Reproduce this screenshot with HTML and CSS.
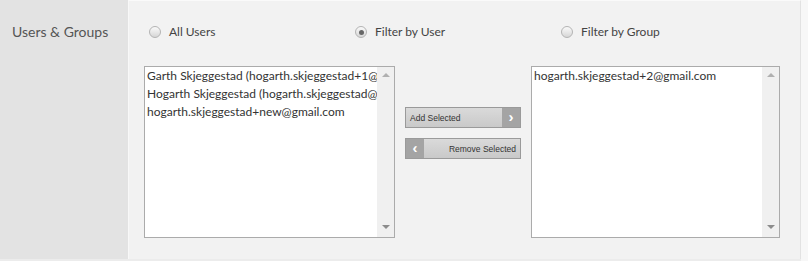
FILE: index.html
```html
<!DOCTYPE html>
<html lang="en">
<head>
  <meta charset="UTF-8">
  <title>Users &amp; Groups</title>
  <link rel="stylesheet" href="styles.css">
</head>
<body>

  <div class="field-row">
    <div class="field-label">Users &amp; Groups</div>

    <div class="field-body">
      <div class="radio-row">
        <label class="radio"><span class="radio-dot"></span>All Users</label>
        <label class="radio checked"><span class="radio-dot"></span>Filter by User</label>
        <label class="radio"><span class="radio-dot"></span>Filter by Group</label>
      </div>

      <div class="picker">
        <div class="listbox left">
          <div class="list-items">
            <div class="item">Garth Skjeggestad (hogarth.skjeggestad+1@gmail.com)</div>
            <div class="item">Hogarth Skjeggestad (hogarth.skjeggestad@gmail.com)</div>
            <div class="item">hogarth.skjeggestad+new@gmail.com</div>
          </div>
          <div class="scrollbar"><span class="arrow up"></span><span class="arrow down"></span></div>
        </div>

        <div class="picker-actions">
          <button class="move-btn add">
            <span class="btn-text">Add Selected</span>
            <span class="btn-cap">&#8250;</span>
          </button>
          <button class="move-btn remove">
            <span class="btn-cap">&#8249;</span>
            <span class="btn-text">Remove Selected</span>
          </button>
        </div>

        <div class="listbox right">
          <div class="list-items">
            <div class="item">hogarth.skjeggestad+2@gmail.com</div>
          </div>
          <div class="scrollbar"><span class="arrow up"></span><span class="arrow down"></span></div>
        </div>
      </div>
    </div>
  </div>

</body>
</html>
```

FILE: styles.css
```css
body {
  margin: 0;
  font-family: Lato, "Open Sans", sans-serif;
  color: #444;
  background: #f7f7f7;
}

.field-row {
  display: flex;
  width: 801px;
  height: 259px;
  border-bottom: 2px solid #ececec;
}

.field-label {
  width: 128px;
  background: #e3e3e3;
  padding: 23px 0 0 12px;
  box-sizing: border-box;
  font-size: 14px;
  color: #555;
}

.field-body {
  flex: 1;
  background: #f2f2f2;
  border-top: 1px solid #fafafa;
  border-left: 1px solid #f8f8f8;
  border-right: 1px solid #e2e2e2;
  padding: 0 20px 0 15px;
}

/* radios */
.radio-row {
  display: grid;
  grid-template-columns: 206px 206px 1fr;
  align-items: start;
  padding: 23px 0 0 5px;
  height: 65px;
  box-sizing: border-box;
}

.radio {
  display: flex;
  align-items: center;
  gap: 8px;
  font-size: 12px;
  line-height: 16px;
  color: #444;
}

.radio-dot {
  width: 10px;
  height: 10px;
  border-radius: 50%;
  border: 1px solid #b4b4b4;
  background: linear-gradient(#fafafa, #d6d6d6);
  display: flex;
  align-items: center;
  justify-content: center;
}

.radio.checked .radio-dot::after {
  content: "";
  width: 5px;
  height: 5px;
  border-radius: 50%;
  background: #666;
}

/* picker */
.picker {
  display: flex;
  align-items: flex-start;
}

.listbox {
  display: flex;
  height: 172px;
  background: #fff;
  border: 1px solid #ababab;
  box-sizing: border-box;
}

.listbox.left { width: 251px; }
.listbox.right { width: 249px; }

.list-items {
  flex: 1;
  overflow: hidden;
  padding: 0 0 0 2px;
}

.item {
  white-space: nowrap;
  font-size: 12px;
  line-height: 18px;
  color: #333;
}

.scrollbar {
  width: 17px;
  background: #f0f0f0;
  display: flex;
  flex-direction: column;
  justify-content: space-between;
  align-items: center;
  padding: 6px 0 8px;
}

.arrow {
  width: 0;
  height: 0;
  border-left: 4px solid transparent;
  border-right: 4px solid transparent;
}
.arrow.up { border-bottom: 4px solid #b0b0b0; }
.arrow.down { border-top: 4px solid #8c8c8c; }

.picker-actions {
  display: flex;
  flex-direction: column;
  gap: 10px;
  margin: 41px 10px 0 10px;
}

.move-btn {
  display: flex;
  width: 116px;
  height: 21px;
  padding: 0;
  border: 1px solid #9a9a9a;
  background: linear-gradient(#dadada, #c9c9c9);
  font-family: "Liberation Sans", Arial, sans-serif;
  font-size: 8.5px;
  color: #333;
  cursor: pointer;
}

.btn-text {
  flex: 1;
  align-self: center;
  padding: 0 4px;
}
.move-btn.add .btn-text { text-align: left; }
.move-btn.remove .btn-text { text-align: right; }

.btn-cap {
  width: 18px;
  height: 100%;
  background: #a4a4a4;
  color: #fff;
  font-size: 15px;
  font-weight: bold;
  line-height: 17px;
  text-align: center;
}
```
